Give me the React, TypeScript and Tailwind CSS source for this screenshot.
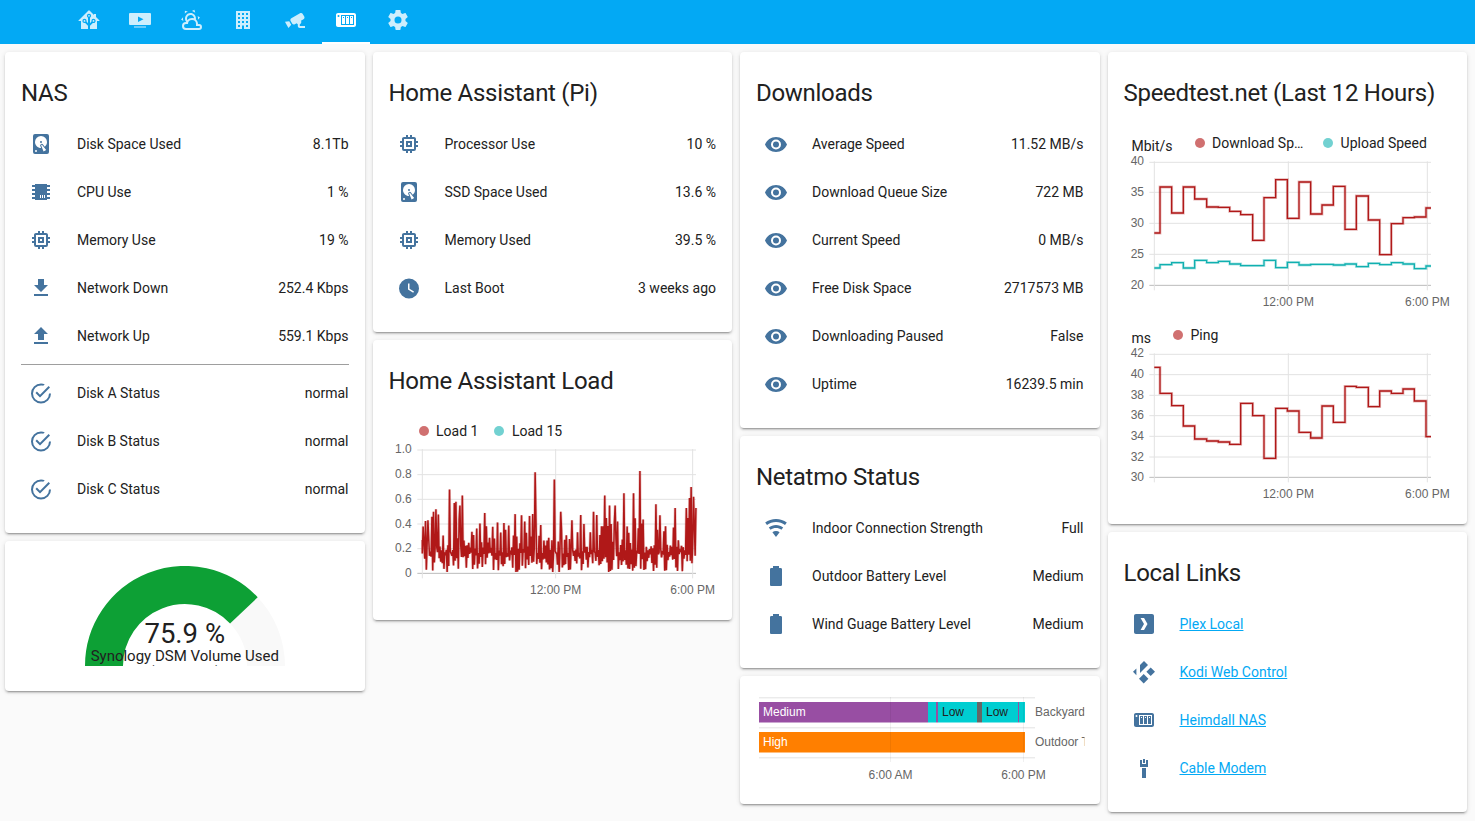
import type { ReactNode } from 'react';

// material design icon paths
const ic = {
  home: 'M21.8,13H20V21H13V17.67L15.79,14.88L16.5,15C17.66,15 18.6,14.06 18.6,12.9C18.6,11.74 17.66,10.8 16.5,10.8A2.1,2.1 0 0,0 14.4,12.9L14.5,13.61L13,15.13V9.65C13.66,9.29 14.1,8.6 14.1,7.8A2.1,2.1 0 0,0 12,5.7A2.1,2.1 0 0,0 9.9,7.8C9.9,8.6 10.34,9.29 11,9.65V15.13L9.5,13.61L9.6,12.9A2.1,2.1 0 0,0 7.5,10.8A2.1,2.1 0 0,0 5.4,12.9A2.1,2.1 0 0,0 7.5,15L8.21,14.88L11,17.67V21H4V13H2.25C1.83,13 1.42,13 1.42,12.79C1.43,12.57 1.85,12.15 2.28,11.72L11,3C11.33,2.67 11.67,2.33 12,2.33C12.33,2.33 12.67,2.67 13,3L17,7V6H19V9L21.78,11.78C22.18,12.18 22.59,12.59 22.6,12.8C22.6,13 22.2,13 21.8,13M7.5,12A0.9,0.9 0 0,1 8.4,12.9A0.9,0.9 0 0,1 7.5,13.8A0.9,0.9 0 0,1 6.6,12.9A0.9,0.9 0 0,1 7.5,12M16.5,12C17,12 17.4,12.4 17.4,12.9C17.4,13.4 17,13.8 16.5,13.8A0.9,0.9 0 0,1 15.6,12.9A0.9,0.9 0 0,1 16.5,12M12,6.9C12.5,6.9 12.9,7.3 12.9,7.8C12.9,8.3 12.5,8.7 12,8.7C11.5,8.7 11.1,8.3 11.1,7.8C11.1,7.3 11.5,6.9 12,6.9Z',
  tv: 'M2 5H22A1 1 0 0 1 23 6V16A1 1 0 0 1 22 17H2A1 1 0 0 1 1 16V6A1 1 0 0 1 2 5ZM10 8.5V14L15.5 11.2ZM6 18.4H18V19.4H6Z',
  weather: 'M12.74,5.47C15.1,6.5 16.35,9.03 15.92,11.46C17.19,12.56 18,14.19 18,16V16.17C18.31,16.06 18.65,16 19,16A3,3 0 0,1 22,19A3,3 0 0,1 19,22H6A4,4 0 0,1 2,18A4,4 0 0,1 6,14H6.27C5,12.45 4.6,10.24 5.5,8.26C6.72,5.5 9.97,4.24 12.74,5.47M11.93,7.3C10.16,6.5 8.09,7.31 7.31,9.07C6.85,10.09 6.93,11.22 7.41,12.13C8.5,10.83 10.16,10 12,10C12.7,10 13.38,10.12 14,10.34C13.94,9.06 13.18,7.86 11.93,7.3M13.55,3.64C13,3.4 12.45,3.23 11.88,3.12L14.37,1.82L15.27,4.71C14.76,4.29 14.19,3.93 13.55,3.64M6.09,4.44C5.6,4.79 5.17,5.19 4.8,5.63L4.91,2.82L7.87,3.5C7.25,3.71 6.65,4.03 6.09,4.44M18,9.71C17.91,9.12 17.78,8.55 17.59,8L19.97,9.5L17.92,11.73C18.03,11.08 18.05,10.4 18,9.71M3.04,11.3C3.11,11.9 3.24,12.47 3.43,13L1.06,11.5L3.1,9.28C3,9.93 2.97,10.61 3.04,11.3M19,18H16V16A4,4 0 0,0 12,12A4,4 0 0,0 8,16H6A2,2 0 0,0 4,18A2,2 0 0,0 6,20H19A1,1 0 0,0 20,19A1,1 0 0,0 19,18Z',
  office: 'M5,3V21H11V17.5H13V21H19V3H5M7,5H9V7H7V5M11,5H13V7H11V5M15,5H17V7H15V5M7,9H9V11H7V9M11,9H13V11H11V9M15,9H17V11H15V9M7,13H9V15H7V13M11,13H13V15H11V13M15,13H17V15H15V13M7,17H9V19H7V17M15,17H17V19H15V17Z',
  cctv: 'M18.15,4.94C17.77,4.91 17.37,5 17,5.2L8.35,10.2C7.39,10.76 7.07,12 7.62,12.94L9.12,15.53C9.67,16.5 10.89,16.82 11.85,16.27L13.65,15.23C13.92,15.69 14.32,16.06 14.81,16.27V18.04C14.81,19.13 15.7,20 16.81,20H22V18.04H16.81V16.27C17.72,15.87 18.31,14.97 18.31,14C18.31,13.54 18.19,13.11 17.97,12.73L20.5,11.27C21.47,10.71 21.8,9.5 21.24,8.53L19.74,5.94C19.37,5.31 18.77,4.97 18.15,4.94M6.22,13.17L2,13.87L2.75,15.17L4.75,18.63L5.5,19.93L8.22,16.63L6.22,13.17Z',
  nas: 'M4,5C2.89,5 2,5.89 2,7V17C2,18.11 2.89,19 4,19H20C21.11,19 22,18.11 22,17V7C22,5.89 21.11,5 20,5H4M4.5,7A1,1 0 0,1 5.5,8A1,1 0 0,1 4.5,9A1,1 0 0,1 3.5,8A1,1 0 0,1 4.5,7M7,7H20V17H7V7M8,8V16H11V8H8M12,8V16H15V8H12M16,8V16H19V8H16M9,9H10V10H9V9M13,9H14V10H13V9M17,9H18V10H17V9Z',
  cog: 'M12,15.5A3.5,3.5 0 0,1 8.5,12A3.5,3.5 0 0,1 12,8.5A3.5,3.5 0 0,1 15.5,12A3.5,3.5 0 0,1 12,15.5M19.43,12.97C19.47,12.65 19.5,12.33 19.5,12C19.5,11.67 19.47,11.34 19.43,11L21.54,9.37C21.73,9.22 21.78,8.95 21.66,8.73L19.66,5.27C19.54,5.05 19.27,4.96 19.05,5.05L16.56,6.05C16.04,5.66 15.5,5.32 14.87,5.07L14.5,2.42C14.46,2.18 14.25,2 14,2H10C9.75,2 9.54,2.18 9.5,2.42L9.13,5.07C8.5,5.32 7.96,5.66 7.44,6.05L4.95,5.05C4.73,4.96 4.46,5.05 4.34,5.27L2.34,8.73C2.21,8.95 2.27,9.22 2.46,9.37L4.57,11C4.53,11.34 4.5,11.67 4.5,12C4.5,12.33 4.53,12.65 4.57,12.97L2.46,14.63C2.27,14.78 2.21,15.05 2.34,15.27L4.34,18.73C4.46,18.95 4.73,19.03 4.95,18.95L7.44,17.94C7.96,18.34 8.5,18.68 9.13,18.93L9.5,21.58C9.54,21.82 9.75,22 10,22H14C14.25,22 14.46,21.82 14.5,21.58L14.87,18.93C15.5,18.67 16.04,18.34 16.56,17.94L19.05,18.95C19.27,19.03 19.54,18.95 19.66,18.73L21.66,15.27C21.78,15.05 21.73,14.78 21.54,14.63L19.43,12.97Z',
  disk: 'M6,2H18A2,2 0 0,1 20,4V20A2,2 0 0,1 18,22H6A2,2 0 0,1 4,20V4A2,2 0 0,1 6,2M12,4A6,6 0 0,0 6,10C6,13.31 8.69,16 12.1,16L11.22,13.77C10.95,13.29 11.11,12.68 11.59,12.4L12.45,11.9C12.93,11.63 13.54,11.79 13.82,12.27L15.74,14.69C17.12,13.59 18,11.9 18,10A6,6 0 0,0 12,4M12,9A1,1 0 0,1 13,10A1,1 0 0,1 12,11A1,1 0 0,1 11,10A1,1 0 0,1 12,9M7,18A1,1 0 0,0 6,19A1,1 0 0,0 7,20A1,1 0 0,0 8,19A1,1 0 0,0 7,18M12.09,13.27L14.58,19.58L17.17,18.08L12.95,12.77L12.09,13.27Z',
  chip: 'M6,4H18V5H21V7H18V9H21V11H18V13H21V15H18V17H21V19H18V20H6V19H3V17H6V15H3V13H6V11H3V9H6V7H3V5H6V4M11,15V18H12V15H11M13,15V18H14V15H13M15,15V18H16V15H15Z',
  memory: 'M17,17H7V7H17M21,11V9H19V7C19,5.89 18.1,5 17,5H15V3H13V5H11V3H9V5H7C5.89,5 5,5.89 5,7V9H3V11H5V13H3V15H5V17A2,2 0 0,0 7,19H9V21H11V19H13V21H15V19H17A2,2 0 0,0 19,17V15H21V13H19V11M13,13H11V11H13M15,9H9V15H15V9Z',
  down: 'M5,20H19V18H5M19,9H15V3H9V9H5L12,16L19,9Z',
  up: 'M9,16V10H5L12,3L19,10H15V16H9M5,20V18H19V20H5Z',
  check: 'M20,12A8,8 0 0,1 12,20A8,8 0 0,1 4,12A8,8 0 0,1 12,4C12.76,4 13.5,4.11 14.2,4.31L15.77,2.74C14.61,2.26 13.34,2 12,2A10,10 0 0,0 2,12A10,10 0 0,0 12,22A10,10 0 0,0 22,12M7.91,10.08L6.5,11.5L11,16L21,6L19.59,4.58L11,13.17L7.91,10.08Z',
  clock: 'M12,2A10,10 0 0,0 2,12A10,10 0 0,0 12,22A10,10 0 0,0 22,12A10,10 0 0,0 12,2M16.2,16.2L11,13V7H12.5V12.2L17,14.9L16.2,16.2Z',
  eye: 'M12,9A3,3 0 0,0 9,12A3,3 0 0,0 12,15A3,3 0 0,0 15,12A3,3 0 0,0 12,9M12,17A5,5 0 0,1 7,12A5,5 0 0,1 12,7A5,5 0 0,1 17,12A5,5 0 0,1 12,17M12,4.5C7,4.5 2.73,7.61 1,12C2.73,16.39 7,19.5 12,19.5C17,19.5 21.27,16.39 23,12C21.27,7.61 17,4.5 12,4.5Z',
  wifi: 'M12,21L15.6,16.2C14.6,15.45 13.35,15 12,15C10.65,15 9.4,15.45 8.4,16.2L12,21M12,3C7.95,3 4.21,4.34 1.2,6.6L3,9C5.5,7.12 8.62,6 12,6C15.38,6 18.5,7.12 21,9L22.8,6.6C19.79,4.34 16.05,3 12,3M12,9C9.3,9 6.81,9.89 4.8,11.4L6.6,13.8C8.1,12.67 9.97,12 12,12C14.03,12 15.9,12.67 17.4,13.8L19.2,11.4C17.19,9.89 14.7,9 12,9Z',
  battery: 'M16.67,4H15V2H9V4H7.33A1.33,1.33 0 0,0 6,5.33V20.67C6,21.4 6.6,22 7.33,22H16.67A1.33,1.33 0 0,0 18,20.67V5.33C18,4.6 17.4,4 16.67,4Z',
  plex: 'M4,2C2.89,2 2,2.89 2,4V20C2,21.11 2.89,22 4,22H20C21.11,22 22,21.11 22,20V4C22,2.89 21.11,2 20,2H4M8.56,6H12.06L15.5,12L12.06,18H8.56L12,12L8.56,6Z',
  kodi: 'M12,1L16,5L8,13V5ZM1,11.8L4.4,8.4V15.2ZM18.7,7.4L23,11.7L18.7,16L14.4,11.7ZM11.7,14L16.4,18.7L11.7,23.4L7,18.7Z',
  cable: 'M11,3V7H13V3H11M8,4V11H16V4H14V8H10V4H8M10,12V22H14V12H10Z',
};

const Icon = ({ d, className }: { d: string; className?: string }) => (
  <svg viewBox="0 0 24 24" className={className ?? 'w-6 h-6 fill-[#44739e]'} fillRule="evenodd">
    <path d={d} />
  </svg>
);

const Card = ({ title, children, className }: { title?: string; children: ReactNode; className?: string }) => (
  <div className={`bg-white rounded-sm shadow-[0_2px_2px_0_rgba(0,0,0,0.14),0_1px_5px_0_rgba(0,0,0,0.12),0_3px_1px_-2px_rgba(0,0,0,0.2)] ${className ?? ''}`}>
    {title && <div className="px-4 pt-[25px] pb-[11px] text-2xl leading-8 tracking-[-0.012em] text-[#212121]">{title}</div>}
    {children}
  </div>
);

const Row = ({ icon, label, value }: { icon: string; label: string; value: string }) => {
  // these sit half a pixel lower in the picture
  const low = icon === ic.eye || icon === ic.check || icon === ic.clock;
  return (
    <div className="flex items-center h-12 px-4 text-sm text-[#212121]">
      <div className="w-10 flex justify-center">
        <Icon d={icon} className={low ? 'w-6 h-6 fill-[#44739e] translate-y-[0.5px]' : undefined} />
      </div>
      <div className="ml-4 flex-1">{label}</div>
      <div>{value}</div>
    </div>
  );
};

const LinkRow = ({ icon, label }: { icon: string; label: string }) => (
  <div className="flex items-center h-12 px-4 text-sm">
    <div className="w-10 flex justify-center">
      <Icon d={icon} />
    </div>
    <a href="#" className="ml-4 text-[#03a9f4] underline">{label}</a>
  </div>
);

const Dot = ({ teal }: { teal?: boolean }) => (
  <span className={`inline-block w-2.5 h-2.5 rounded-full mr-[7.5px] shrink-0 ${teal ? 'bg-[#72d1d1]' : 'bg-[#d07070]'}`} />
);

// points are [x end, y] read from the picture at 3x
const stepPath = (startX: number, pts: number[][], ox: number, oy: number) => {
  let d = `M${ox + startX / 3} ${oy + pts[0][1] / 3}`;
  for (const [x, y] of pts) {
    d += `V${oy + y / 3}H${ox + x / 3}`;
  }
  return d;
};

const Line = ({ d, color }: { d: string; color: string }) => (
  <>
    <path d={d} fill="none" stroke={color} strokeOpacity={0.3} strokeWidth={2.8} />
    <path d={d} fill="none" stroke={color} strokeWidth={1.3} />
  </>
);

const axisFont = { fontFamily: '"Liberation Sans", Arial, sans-serif', fontSize: 12, fill: '#666' };

type GridProps = {
  ox: number;
  oy: number;
  left: number;
  right: number;
  ys: number[];
  xs: number[];
  labels: string[];
  labelYs: number[];
  labelX: number;
  tickY: number;
};

const Grid = ({ ox, oy, left, right, ys, xs, labels, labelYs, labelX, tickY }: GridProps) => (
  <g>
    {ys.map((y, i) => (
      <line key={y} x1={ox + left / 3} x2={ox + right / 3} y1={oy + y / 3} y2={oy + y / 3} stroke={i === ys.length - 1 ? '#bbb' : '#e2e2e2'} />
    ))}
    {xs.map((x) => (
      <line key={x} x1={ox + x / 3} x2={ox + x / 3} y1={oy + ys[0] / 3 - 1} y2={oy + ys[ys.length - 1] / 3 + 5} stroke="#e2e2e2" />
    ))}
    {labels.map((l, i) => (
      <text key={l} x={ox + labelX / 3} y={oy + labelYs[i] / 3 + 4} textAnchor="end" {...axisFont}>{l}</text>
    ))}
    <text x={ox + xs[1] / 3} y={oy + tickY / 3 + 4} textAnchor="middle" {...axisFont}>12:00 PM</text>
    <text x={ox + xs[2] / 3} y={oy + tickY / 3 + 4} textAnchor="middle" {...axisFont}>6:00 PM</text>
  </g>
);

const download = [[120, 309], [155, 171], [190, 249], [224, 171], [260, 207], [295, 231], [329, 232], [362, 244], [398, 254], [432, 331], [467, 203], [502, 149], [537, 265], [572, 156], [606, 252], [640, 225], [675, 169], [709, 298], [745, 198], [779, 270], [814, 374], [849, 281], [883, 263], [918, 261], [933, 234]];
const upload = [[120, 414], [155, 404], [190, 398], [224, 414], [260, 391], [295, 398], [329, 394], [362, 402], [398, 407], [432, 407], [467, 391], [502, 413], [537, 397], [572, 405], [606, 403], [640, 403], [675, 405], [709, 402], [745, 410], [779, 400], [814, 404], [849, 398], [883, 402], [918, 416], [933, 408]];
const ping = [[120, 127], [155, 205], [190, 242], [224, 303], [260, 342], [295, 348], [329, 351], [362, 358], [398, 235], [432, 272], [467, 400], [502, 250], [537, 258], [572, 322], [606, 339], [640, 243], [675, 292], [709, 184], [745, 187], [779, 245], [814, 198], [849, 205], [883, 192], [918, 228], [933, 335]];

// noisy load line, seeded so it draws the same every time
const spikes: Record<number, number> = { 130: 0.38, 145: 0.43, 160: 0.5, 168: 0.52, 208: 0.68, 222: 0.57, 228: 0.58, 240: 0.55, 247: 0.63, 315: 0.49, 458: 0.48, 465: 0.82, 522: 0.76, 543: 0.5, 575: 0.43, 640: 0.5, 675: 0.63, 688: 0.55, 705: 0.55, 732: 0.65, 760: 0.65, 780: 0.83, 828: 0.56, 840: 0.47, 885: 0.53, 918: 0.53, 928: 0.61, 933: 0.7, 941: 0.62, 947: 0.53 };

const loadPath = (ox: number, oy: number) => {
  let seed = 12345;
  const rand = () => {
    seed = (seed * 1664525 + 1013904223) % 4294967296;
    return seed / 4294967296;
  };
  const toY = (v: number) => oy + (475 - v * 370) / 3;
  let d = `M${ox + 127 / 3} ${toY(0.27)}`;
  let high = true;
  for (let zx = 127; zx <= 948; zx += 2.4) {
    const r = rand();
    let v = high ? 0.16 + r * r * 0.32 : 0.01 + r * 0.17;
    for (const key of Object.keys(spikes)) {
      const k = Number(key);
      if (Math.abs(k - zx) < 1.2) v = spikes[k];
    }
    high = !high;
    d += `L${ox + zx / 3} ${toY(v)}`;
  }
  return d;
};

const Gauge = () => {
  const r = 81;
  const a = Math.PI * (1 - 0.759);
  const x = 100 + r * Math.cos(a);
  const y = 100 - r * Math.sin(a);
  return (
    <div className="relative w-[200px] h-[100px] mx-auto overflow-hidden text-[#212121]">
      <svg viewBox="0 0 200 100" className="w-[200px] h-[100px] block">
        <path d="M19 100A81 81 0 0 1 181 100" fill="none" stroke="#f9f9f9" strokeWidth={38} />
        <path d={`M19 100A81 81 0 0 1 ${x} ${y}`} fill="none" stroke="#0da035" strokeWidth={38} />
      </svg>
      <div className="absolute left-0 right-0 top-[50px] text-center">
        <div className="text-[27.5px] leading-[36px]">75.9 %</div>
        <div className="text-[15px] leading-4 -mt-[4px]">Synology DSM Volume Used</div>
        <div className="text-[15px] leading-4">(volume 2)</div>
      </div>
    </div>
  );
};

export default function App() {
  const tabs = [ic.home, ic.tv, ic.weather, ic.office, ic.cctv, ic.nas, ic.cog];

  return (
    <div className="h-screen overflow-hidden bg-[#fafafa] font-['Roboto',sans-serif]">
      <header className="h-11 bg-[#03a9f4] flex pl-[63px]">
        {tabs.map((t, i) => (
          <div key={i} className="relative w-[51.5px] h-11 pb-[4px] flex items-center justify-center">
            <Icon d={t} className={i === 5 ? 'w-6 h-6 fill-white' : 'w-6 h-6 fill-[#cdeefd]'} />
            {i === 5 && <div className="absolute bottom-0 left-[1.75px] w-12 h-[2px] bg-white" />}
          </div>
        ))}
      </header>

      <main className="grid grid-cols-4 gap-2 pl-[5px] pr-2 pt-2 items-start">
        <div className="flex flex-col gap-2">
          <Card title="NAS" className="pb-5">
            <Row icon={ic.disk} label="Disk Space Used" value="8.1Tb" />
            <Row icon={ic.chip} label="CPU Use" value="1 %" />
            <Row icon={ic.memory} label="Memory Use" value="19 %" />
            <Row icon={ic.down} label="Network Down" value="252.4 Kbps" />
            <Row icon={ic.up} label="Network Up" value="559.1 Kbps" />
            <div className="h-px mx-4 my-1 bg-[#9e9e9e]" />
            <Row icon={ic.check} label="Disk A Status" value="normal" />
            <Row icon={ic.check} label="Disk B Status" value="normal" />
            <Row icon={ic.check} label="Disk C Status" value="normal" />
          </Card>
          <Card className="py-[25px]">
            <Gauge />
          </Card>
        </div>

        <div className="flex flex-col gap-2">
          <Card title="Home Assistant (Pi)" className="pb-5">
            <Row icon={ic.memory} label="Processor Use" value="10 %" />
            <Row icon={ic.disk} label="SSD Space Used" value="13.6 %" />
            <Row icon={ic.memory} label="Memory Used" value="39.5 %" />
            <Row icon={ic.clock} label="Last Boot" value="3 weeks ago" />
          </Card>
          <Card title="Home Assistant Load" className="h-[280px]">
            <div className="flex items-center h-6 mt-[11px] pl-[46px] text-sm text-[#212121]">
              <Dot />
              <span>Load 1</span>
              <span className="ml-4 flex items-center">
                <Dot teal />
                Load 15
              </span>
            </div>
            <svg className="block w-full h-[165px]">
              <Grid ox={7} oy={-28} left={112} right={948} ys={[105, 179, 253, 327, 401, 475]} xs={[127, 527, 938]} labels={['1.0', '0.8', '0.6', '0.4', '0.2', '0']} labelYs={[103, 178, 252, 326, 400, 473]} labelX={95} tickY={524} />
              <path d={loadPath(7, -28)} fill="none" stroke="#b01818" strokeOpacity={0.25} strokeWidth={2.8} />
              <path d={loadPath(7, -28)} fill="none" stroke="#b01818" strokeWidth={1.5} />
            </svg>
          </Card>
        </div>

        <div className="flex flex-col gap-2">
          <Card title="Downloads" className="pb-5">
            <Row icon={ic.eye} label="Average Speed" value="11.52 MB/s" />
            <Row icon={ic.eye} label="Download Queue Size" value="722 MB" />
            <Row icon={ic.eye} label="Current Speed" value="0 MB/s" />
            <Row icon={ic.eye} label="Free Disk Space" value="2717573 MB" />
            <Row icon={ic.eye} label="Downloading Paused" value="False" />
            <Row icon={ic.eye} label="Uptime" value="16239.5 min" />
          </Card>
          <Card title="Netatmo Status" className="pb-5">
            <Row icon={ic.wifi} label="Indoor Connection Strength" value="Full" />
            <Row icon={ic.battery} label="Outdoor Battery Level" value="Medium" />
            <Row icon={ic.battery} label="Wind Guage Battery Level" value="Medium" />
          </Card>
          <Card className="h-[128px]">
            <svg className="block w-full h-[128px]">
              <defs>
                <clipPath id="names">
                  <rect x={295} y={0} width={49.5} height={128} />
                </clipPath>
              </defs>
              {[37, 127, 217].map((y) => (
                <line key={y} x1={19} x2={295} y1={9 + y / 3 + 0.5} y2={9 + y / 3 + 0.5} stroke="#e2e2e2" />
              ))}
              <rect x={19} y={26} width={169} height={20.5} fill="#984ea3" />
              <rect x={188} y={26} width={8} height={20.5} fill="#00ced1" />
              <rect x={196} y={26} width={2} height={20.5} fill="#984ea3" />
              <rect x={198} y={26} width={39} height={20.5} fill="#00ced1" />
              <rect x={237} y={26} width={5} height={20.5} fill="#666" />
              <rect x={242} y={26} width={36} height={20.5} fill="#00ced1" />
              <rect x={278} y={26} width={1} height={20.5} fill="#984ea3" />
              <rect x={279} y={26} width={6} height={20.5} fill="#00ced1" />
              <rect x={19} y={56} width={266} height={20.5} fill="#ff7f00" />
              {[150.5, 283.5].map((x) => (
                <line key={x} x1={x} x2={x} y1={21} y2={86} stroke="#000" strokeOpacity={0.06} />
              ))}
              <text x={23} y={40} {...axisFont} fill="#fff">Medium</text>
              <text x={202} y={40} {...axisFont} fill="#212121">Low</text>
              <text x={246} y={40} {...axisFont} fill="#212121">Low</text>
              <text x={23} y={70} {...axisFont} fill="#fff">High</text>
              <g clipPath="url(#names)">
                <text x={295} y={40} {...axisFont}>Backyard Temperature</text>
                <text x={295} y={70} {...axisFont}>Outdoor Temperature</text>
              </g>
              <text x={150.5} y={102.5} textAnchor="middle" {...axisFont}>6:00 AM</text>
              <text x={283.5} y={102.5} textAnchor="middle" {...axisFont}>6:00 PM</text>
            </svg>
          </Card>
        </div>

        <div className="flex flex-col gap-2">
          <Card title="Speedtest.net (Last 12 Hours)" className="h-[472px]">
            <div className="flex items-center h-6 mt-[11px] pl-6 text-sm text-[#212121]">
              <span className="pt-1.5">Mbit/s</span>
              <span className="ml-[22px] flex items-center">
                <Dot />
                <span className="w-[91px] truncate text-clip">Download Sp…</span>
              </span>
              <span className="ml-5 flex items-center">
                <Dot teal />
                Upload Speed
              </span>
            </div>
            <svg className="block w-full h-[168px]">
              <Grid ox={12} oy={-25} left={88} right={933} ys={[97, 187, 280, 373, 466]} xs={[103, 505, 922]} labels={['40', '35', '30', '25', '20']} labelYs={[92, 185, 278, 371, 465]} labelX={72} tickY={515} />
              <Line d={stepPath(103, download, 12, -25)} color="#b01818" />
              <Line d={stepPath(103, upload, 12, -25)} color="#10b0b0" />
            </svg>
            <div className="flex items-center h-6 pl-6 text-sm text-[#212121]">
              <span className="pt-1.5">ms</span>
              <span className="ml-[22px] flex items-center">
                <Dot />
                Ping
              </span>
            </div>
            <svg className="block w-full h-[158px]">
              <Grid ox={12} oy={-22} left={88} right={933} ys={[88, 149, 211, 272, 334, 396, 457]} xs={[103, 505, 922]} labels={['42', '40', '38', '36', '34', '32', '30']} labelYs={[84, 147, 209, 270, 334, 396, 456]} labelX={72} tickY={507} />
              <Line d={stepPath(103, ping, 12, -22)} color="#b01818" />
            </svg>
          </Card>
          <Card title="Local Links" className="pb-5">
            <LinkRow icon={ic.plex} label="Plex Local" />
            <LinkRow icon={ic.kodi} label="Kodi Web Control" />
            <LinkRow icon={ic.nas} label="Heimdall NAS" />
            <LinkRow icon={ic.cable} label="Cable Modem" />
          </Card>
        </div>
      </main>
    </div>
  );
}
